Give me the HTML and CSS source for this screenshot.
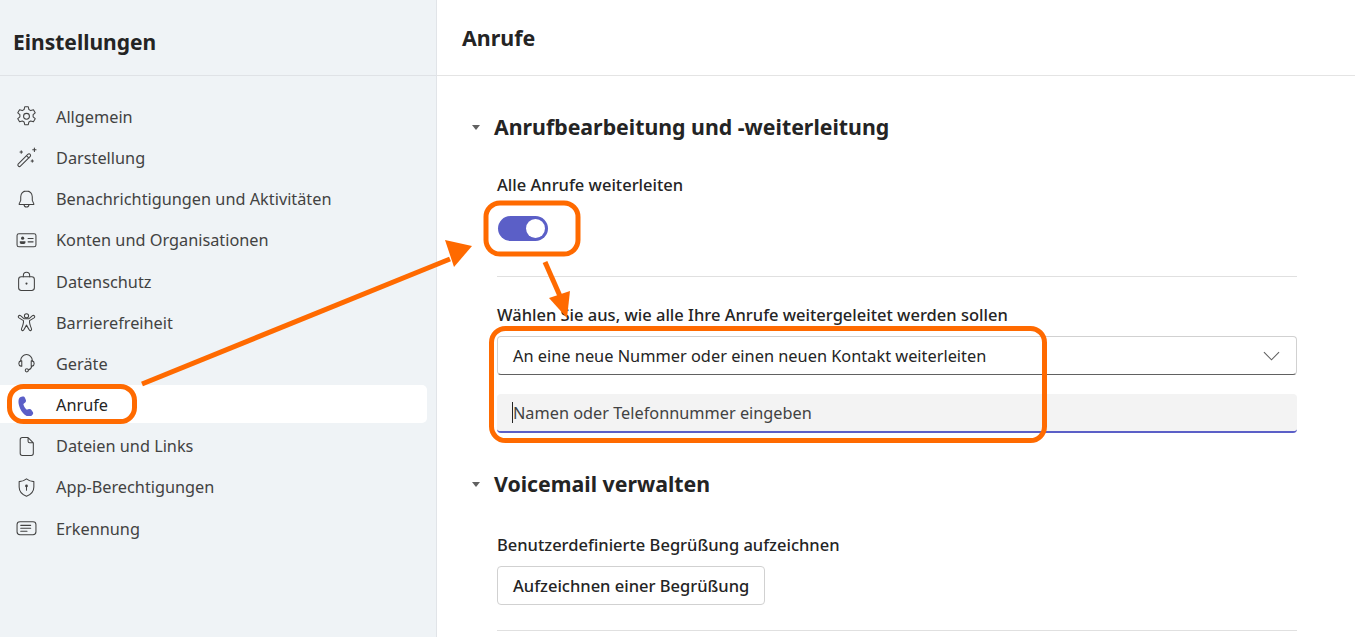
FILE: index.html
```html
<!DOCTYPE html>
<html lang="de">
<head>
  <meta charset="UTF-8" />
  <title>Einstellungen - Anrufe</title>
  <link rel="stylesheet" href="styles.css">
</head>
<body>
  <div class="app">
    <aside class="sidebar">
      <div class="sidebar-head"><h1>Einstellungen</h1></div>
      <nav class="side-nav">
        <a class="side-item">
          <svg viewBox="0 0 20 20"><path d="M8.300.8h3.400l.6 2.600 1.700 1 2.600-.8 1.700 2.900-2 1.800v2l2 1.800-1.700 2.900-2.600-.8-1.700 1-.6 2.600H8.300l-.6-2.600-1.700-1-2.600.8-1.700-2.900 2-1.800v-2l-2-1.800 1.700-2.900 2.600.8 1.700-1z"/><circle cx="10" cy="9.800" r="2.800"/></svg>
          Allgemein
        </a>
        <a class="side-item">
          <svg viewBox="0 0 20 20"><path d="M2 16.200 11.200 7c.7-.7 1.800-.7 2.300 0 .6.600.5 1.500-.1 2.100L4.200 18.300c-.6.600-1.400.5-1.900 0-.6-.6-.7-1.500-.3-2.100zM10 8.200l2.300 2.300"/><path d="M17.500 1v3.200M15.900 2.600h3.200M5 3.500v2.400M3.800 4.700h2.400M15.500 12.200v2.200M14.400 13.300h2.200"/></svg>
          Darstellung
        </a>
        <a class="side-item">
          <svg viewBox="0 0 20 20"><path d="M10 1.800c-3.300 0-5.500 2.500-5.500 5.500v3.500l-1.500 3.400c-.1.300.1.600.4.600h13.200c.3 0 .5-.3.400-.6l-1.500-3.400V7.300c0-3-2.200-5.500-5.500-5.500zM7.600 14.900c.2 1.400 1.200 2.300 2.400 2.300s2.200-.9 2.400-2.300"/></svg>
          Benachrichtigungen und Aktivitäten
        </a>
        <a class="side-item">
          <svg viewBox="0 0 20 20"><rect x="1" y="3.500" width="18" height="12.500" rx="1.800"/><circle class="fill" cx="6.300" cy="7.800" r="1.500"/><path class="fill" d="M3.600 10.800h5.400v1c0 1-1.200 1.600-2.700 1.600s-2.700-.6-2.700-1.600z"/><path d="M11.500 8h4.800M11.500 11.300h4.800"/></svg>
          Konten und Organisationen
        </a>
        <a class="side-item">
          <svg viewBox="0 0 20 20"><rect x="2.500" y="5.500" width="15" height="13" rx="2.500"/><path d="M7 5.500V4.200a3 3 0 0 1 6 0v1.300"/><circle class="fill" cx="10" cy="12" r="1"/></svg>
          Datenschutz
        </a>
        <a class="side-item">
          <svg viewBox="0 0 20 20"><circle cx="10" cy="3.600" r="2"/><path d="M2.500 3.700c-.6.700-.3 1.500.3 1.900l4.300 2.600c.3 1.900-.3 4-1.800 7.600-.7 1.700 1.400 2.600 2.200 1.200L10 12.500l2.500 4.500c.8 1.400 2.900.5 2.200-1.200-1.500-3.600-2.100-5.700-1.800-7.600l4.300-2.600c.6-.4.900-1.200.3-1.900-.5-.6-1.200-.6-1.800-.2L12.200 6.500H7.800L4.300 3.500c-.6-.4-1.300-.4-1.800.2z"/></svg>
          Barrierefreiheit
        </a>
        <a class="side-item">
          <svg viewBox="0 0 20 20"><path d="M4.500 7.500V7a5.500 5.500 0 0 1 11 0v.5"/><path d="M4.500 7.500c-1.200.3-1.800 1.300-1.800 2.500s.8 2.300 2 2.500h.8v-5zM15.500 7.500c1.200.3 1.800 1.300 1.800 2.500s-.8 2.300-2 2.500h-.8v-5zM15 12.500c-.3 2-1.500 3.300-3.300 3.700"/><circle cx="10.300" cy="16.500" r="1.500"/></svg>
          Geräte
        </a>
        <a class="side-item active">
          <svg viewBox="0 0 20 20"><path class="fill" d="M4.400 2 6.200 1.500c1-.3 1.900.2 2.300 1.100l.9 2.200c.3.800.1 1.700-.6 2.300L7.300 8.400c-.2.200-.3.400-.2.700.5 1.900 1.500 3.500 3 4.700.2.200.5.200.7.100l1.500-.5c.9-.3 1.900 0 2.400.8l1.300 2c.6.900.4 2-.4 2.700l-1.100 1c-1 .9-2.300 1-3.500.5-3-1.300-5.400-3.800-7.100-7.500C2.300 9.100 2 6.300 2.700 3.900c.3-.9.900-1.600 1.700-1.900z"/></svg>
          Anrufe
        </a>
        <a class="side-item">
          <svg viewBox="0 0 20 20"><path d="M4 3.500C4 2.400 4.900 1.500 6 1.500h5.500L16.500 6.500v10c0 1.100-.9 2-2 2H6c-1.100 0-2-.9-2-2zM11.500 1.500v3.500c0 .9.600 1.500 1.500 1.500h3.500"/></svg>
          Dateien und Links
        </a>
        <a class="side-item">
          <svg viewBox="0 0 20 20"><path d="M10 1.800c2.100 1.700 4.300 2.500 7 2.600v5.100c0 4.100-2.300 7-7 8.800-4.700-1.800-7-4.700-7-8.800V4.400c2.700-.1 4.900-.9 7-2.600z"/><circle class="fill" cx="10" cy="8.500" r="1.300"/><path d="M10 9v3.500"/></svg>
          App-Berechtigungen
        </a>
        <a class="side-item">
          <svg viewBox="0 0 20 20"><rect x="1" y="3.500" width="18" height="12.500" rx="2.800"/><path d="M4.500 7h9.500M4.500 9.800h9.500M4.500 12.600h6"/></svg>
          Erkennung
        </a>
      </nav>
    </aside>

    <main class="content">
      <div class="content-head"><h2>Anrufe</h2></div>
      <div class="content-body">
        <h3 class="section-title"><span class="caret"></span>Anrufbearbeitung und -weiterleitung</h3>
        <div class="section">
          <div class="label first">Alle Anrufe weiterleiten</div>
          <div class="toggle"><span class="knob"></span></div>
          <hr class="divider">
          <div class="label">Wählen Sie aus, wie alle Ihre Anrufe weitergeleitet werden sollen</div>
          <div class="dropdown">
            <span>An eine neue Nummer oder einen neuen Kontakt weiterleiten</span>
            <svg viewBox="0 0 18 10"><path d="M1 1l8 8 8-8"/></svg>
          </div>
          <div class="text-input"><span class="cursor"></span>Namen oder Telefonnummer eingeben</div>
        </div>
        <h3 class="section-title second"><span class="caret"></span>Voicemail verwalten</h3>
        <div class="section">
          <div class="label voicemail">Benutzerdefinierte Begrüßung aufzeichnen</div>
          <button class="btn">Aufzeichnen einer Begrüßung</button>
          <hr class="divider last">
        </div>
      </div>
    </main>
  </div>

  <!-- orange markup drawn over the screenshot -->
  <svg class="markup" viewBox="0 0 1355 637">
    <rect x="9.500" y="386.500" width="125" height="35" rx="14"/>
    <rect x="486" y="203" width="92" height="51" rx="14"/>
    <rect x="491.500" y="328.500" width="553" height="112" rx="14"/>
    <path d="M142 384 450 259"/>
    <path class="head" d="M472 246 445 240 454 267z"/>
    <path d="M545 262 560 296"/>
    <path class="head" d="M567 318 549 298 570 291z"/>
  </svg>
</body>
</html>
```

FILE: styles.css
```css
* {
  box-sizing: border-box;
}

html, body {
  height: 100%;
}

body {
  margin: 0;
  font-family: 'Noto Sans', 'Open Sans', sans-serif;
  color: #242424;
  background: #fff;
  overflow: hidden;
  position: relative;
}

.app {
  display: flex;
  height: 637px;
}

/* sidebar */
.sidebar {
  width: 437px;
  flex-shrink: 0;
  background: #eff3f6;
  border-right: 1px solid #e1e4e8;
}

.sidebar-head {
  height: 76px;
  padding: 27px 0 0 13px;
  border-bottom: 1px solid #dfe2e6;
}

.sidebar-head h1 {
  margin: 0;
  font-size: 21px;
  line-height: 30px;
  font-weight: 700;
}

.side-nav {
  display: flex;
  flex-direction: column;
  gap: 3.2px;
  padding: 21px 9px 0 0;
}

.side-item {
  display: flex;
  align-items: center;
  gap: 19px;
  height: 38px;
  padding: 1.6px 0 0 16px;
  font-size: 16.3px;
  color: #424242;
  border-radius: 0 5px 5px 0;
}

.side-item svg {
  width: 21px;
  height: 21px;
  flex-shrink: 0;
  fill: none;
  stroke: #424242;
  stroke-width: 1;
  stroke-linejoin: round;
  stroke-linecap: round;
}

.side-item svg .fill {
  fill: #424242;
  stroke: none;
}

.side-item.active {
  background: #fff;
  color: #242424;
}

.side-item.active svg .fill {
  fill: #5b5fc7;
}

/* main pane */
.content {
  flex: 1;
  min-width: 0;
}

.content-head {
  height: 76px;
  padding: 23px 0 0 25px;
  border-bottom: 1px solid #e4e4e4;
}

.content-head h2 {
  margin: 0;
  font-size: 21.4px;
  line-height: 30px;
  font-weight: 700;
}

.content-body {
  padding: 36px 58px 0 35px;
}

.section-title {
  display: flex;
  align-items: center;
  margin: 0;
  font-size: 21.3px;
  line-height: 30px;
  font-weight: 700;
}

.section-title.second {
  margin-top: 36px;
}

.caret {
  width: 0;
  height: 0;
  margin: 0 14px 0 0;
  border-left: 4.500px solid transparent;
  border-right: 4.500px solid transparent;
  border-top: 5px solid #616161;
}

.section {
  padding-left: 25px;
}

.label {
  font-size: 16.5px;
  line-height: 22px;
  font-weight: 500;
}

.label.first {
  margin-top: 32px;
}

.label.voicemail {
  margin-top: 35px;
}

.toggle {
  display: flex;
  justify-content: flex-end;
  align-items: center;
  width: 50px;
  height: 25px;
  margin: 20px 0 0 1px;
  padding-right: 3px;
  border-radius: 13px;
  background: #5b5fc7;
}

.knob {
  width: 19px;
  height: 19px;
  border-radius: 50%;
  background: #fff;
}

.divider {
  margin: 35px 0 27px;
  border: 0;
  border-top: 1px solid #e0e0e0;
}

.divider.last {
  margin: 25px 0 0;
}

.dropdown {
  display: flex;
  justify-content: space-between;
  align-items: center;
  height: 39px;
  margin-top: 10px;
  padding: 0 16px 0 15px;
  font-size: 16.35px;
  border: 1px solid #d1d1d1;
  border-bottom-color: #616161;
  border-radius: 4px;
}

.dropdown svg {
  width: 17px;
  height: 10px;
  fill: none;
  stroke: #616161;
  stroke-width: 1.200;
}

.text-input {
  display: flex;
  align-items: center;
  height: 39px;
  margin-top: 19px;
  padding-left: 15px;
  font-size: 16.3px;
  color: #424242;
  background: #f3f3f3;
  border-bottom: 2px solid #5b5fc7;
  border-radius: 4px;
}

.cursor {
  width: 1px;
  height: 21px;
  background: #242424;
}

.btn {
  display: block;
  height: 39px;
  margin-top: 10px;
  padding: 0 15px;
  font-family: inherit;
  font-size: 16.5px;
  font-weight: 500;
  color: #242424;
  background: #fff;
  border: 1px solid #d1d1d1;
  border-radius: 4px;
}

/* annotation overlay */
.markup {
  position: absolute;
  top: 0;
  left: 0;
  width: 1355px;
  height: 637px;
  fill: none;
  stroke: #ff6a00;
  stroke-width: 5;
  pointer-events: none;
}

.markup .head {
  fill: #ff6a00;
  stroke: none;
}
```
